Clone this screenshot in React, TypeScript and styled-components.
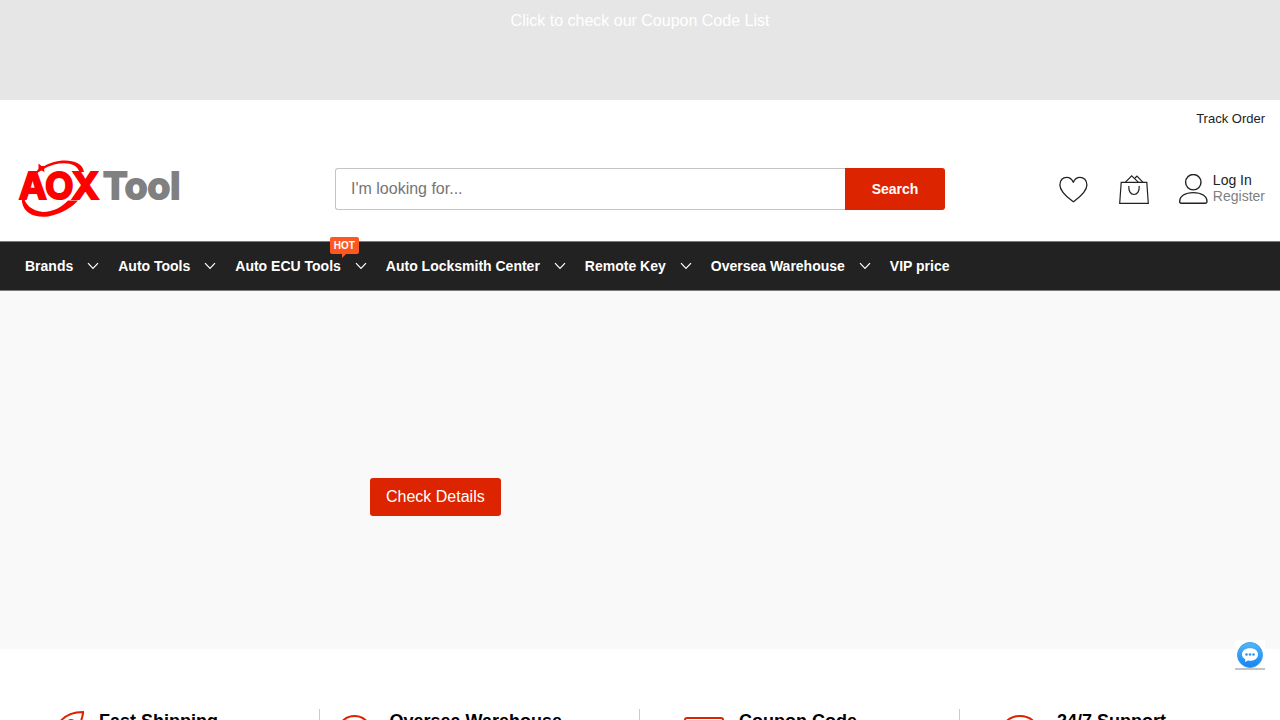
import React from "react";
import styled, { createGlobalStyle } from "styled-components";

const GlobalStyle = createGlobalStyle`
  *, *::before, *::after { box-sizing: border-box; }
  body {
    margin: 0;
    background: #fff;
    color: #000;
    font-family: "Liberation Sans", Arial, sans-serif;
    font-size: 14px;
  }
  a { color: inherit; text-decoration: none; }
  button, input { font-family: inherit; }
`;

const Page = styled.div`
  height: 100vh;
  overflow: hidden;
`;

const CouponBanner = styled.a`
  display: block;
  height: 100px;
  padding-top: 10px;
  background: #e6e6e6;
  color: #fff;
  font-size: 16px;
  line-height: 22px;
  text-align: center;
`;

const TopLinks = styled.div`
  display: flex;
  justify-content: flex-end;
  padding: 10px 15px 8px;
  color: #222;
  font-size: 13px;
  line-height: 18px;
`;

const HeaderRow = styled.div`
  display: grid;
  grid-template-columns: 1fr 2fr 1fr;
  align-items: center;
  height: 105px;
`;

const LogoLink = styled.a`
  display: flex;
  padding: 0 15px;
`;

const SearchForm = styled.form`
  display: flex;
  height: 42px;
  margin: 0 15px;
`;

const SearchInput = styled.input`
  flex: 1;
  min-width: 0;
  padding: 0 15px;
  border: 1px solid #c4c4c4;
  border-right: 0;
  border-radius: 3px 0 0 3px;
  background: #fff;
  font-size: 16px;
  &::placeholder { color: #757575; }
`;

const SearchButton = styled.button`
  width: 100px;
  border: 0;
  border-radius: 0 3px 3px 0;
  background: #dd2400;
  color: #fff;
  font-size: 14px;
  font-weight: 700;
`;

const Actions = styled.div`
  display: flex;
  justify-content: flex-end;
  align-items: center;
  gap: 30px;
  padding: 0 15px;
`;

const IconLink = styled.a`
  display: flex;
`;

const Account = styled.div`
  display: flex;
  align-items: center;
  gap: 4px;
`;

const AccountLinks = styled.div`
  display: flex;
  flex-direction: column;
  padding-bottom: 2px;
  line-height: 16px;
`;

const AccountLink = styled.a<{ $muted?: boolean }>`
  color: ${(p) => (p.$muted ? "#808080" : "#222")};
`;

const NavBar = styled.nav`
  height: 50px;
  border: solid #7a7a7a;
  border-width: 1px 0;
  background: #222;
`;

const NavList = styled.ul`
  display: flex;
  gap: 19px;
  height: 100%;
  margin: 0;
  padding: 0 25px;
  list-style: none;
`;

const NavItem = styled.li`
  position: relative;
  display: flex;
  align-items: center;
`;

const NavLink = styled.a`
  display: flex;
  align-items: center;
  gap: 14px;
  color: #fff;
  font-weight: 700;
  line-height: 20px;
  white-space: nowrap;
`;

const HotBadge = styled.span`
  position: absolute;
  top: -5px;
  right: 8px;
  padding: 0 4px;
  border-radius: 2px;
  background: #ff5722;
  color: #fff;
  font-size: 10px;
  font-weight: 700;
  line-height: 17px;
  &::after {
    content: "";
    position: absolute;
    top: 100%;
    left: 12px;
    border-top: 4px solid #ff5722;
    border-right: 4px solid transparent;
  }
`;

const Hero = styled.section`
  height: 358px;
  padding: 187px 370px 0;
  background: #f9f9f9;
`;

const HeroButton = styled.button`
  height: 38px;
  padding: 0 16px;
  border: 0;
  border-radius: 3px;
  background: #dd2400;
  color: #fff;
  font-size: 16px;
  white-space: nowrap;
`;

const Features = styled.section`
  display: grid;
  grid-template-columns: repeat(4, 1fr);
  padding-top: 60px;
`;

const Feature = styled.div`
  display: flex;
  justify-content: center;
  gap: 15px;
  height: 60px;
  border-right: 1px solid #ccc;
  &:last-child { border-right: 0; }
`;

const FeatureTitle = styled.h3<{ $width: number }>`
  width: ${(p) => p.$width}px;
  margin: 0;
  font-size: 18px;
  line-height: 24px;
  white-space: nowrap;
`;

const ChatButton = styled.button`
  position: fixed;
  right: 15px;
  bottom: 50px;
  display: flex;
  justify-content: center;
  width: 30px;
  height: 30px;
  padding: 2px 0 0;
  border: 0;
  border-bottom: 2px solid #c4c4c4;
  background: #fff;
`;

const Logo = () => (
  <svg width="170" height="64" viewBox="15 157 170 64" role="img" aria-label="AOXTool">
    <path
      d="M43 167 C55 158 82 157 84 172 L79.500 172 C76 161 59 161 44 168.500 Z"
      fill="#f00"
    />
    <path d="M38.500 163.500 L41.500 166 L47 166 L44 169 L44.500 172 L41.500 170.500 L36.500 172.500 L38.500 168.500 Z" fill="#f00" />
    <path d="M38 170 C27 178 21 191 22 202 C24 213 34 218 48 216.500 C62 214 72 207 78 200.500 L68 200.500 C62 207 53 212 43 212 C32 211 24 204 24 196 C25 186 31 177 40 171 Z" fill="#f00" />
    <g fontFamily="Inter, sans-serif" fontWeight="700" fontSize="37" strokeWidth="2">
      <text x="19" y="199" fill="#f00" stroke="#f00">AOX</text>
      <text x="103" y="199" fill="#808080" stroke="#808080">Tool</text>
    </g>
  </svg>
);

const HeartIcon = () => (
  <svg width="30" height="30" viewBox="0 0 30 30" fill="none" stroke="#222" strokeWidth="1.3" strokeLinejoin="round">
    <path d="M14.300 27.800 C10 24.500 1 18.500 .9 11 C.8 6 4 3.300 7.600 3.300 C10.800 3.300 13 5.200 14.300 8.300 C15.600 5.200 17.800 3.300 21 3.300 C24.600 3.300 28 6 27.900 11 C27.800 18.500 18.600 24.500 14.300 27.800 Z" />
  </svg>
);

const BagIcon = () => (
  <svg width="30" height="30" viewBox="0 0 30 30" fill="none" stroke="#222" strokeWidth="1.2">
    <path d="M2.200 8.400 H27.800 L29.300 29.300 H.7 Z" />
    <path d="M6.200 8.400 L12.700 1.800 L19.500 8.400 M16 4 L18 2 L24 8.400" />
    <path d="M9.800 12 C9.500 17 11.500 20.500 15 20.500 C18.500 20.500 20.500 17 20.200 12" />
  </svg>
);

const UserIcon = () => (
  <svg width="30" height="30" viewBox="0 0 30 30" fill="none" stroke="#222" strokeWidth="1.4" strokeLinejoin="round">
    <circle cx="14.300" cy="8.200" r="7.700" />
    <path d="M.7 27.500 C.7 22 6 18.600 14.300 18.600 C22.600 18.600 28 22 28 27.500 Q28 29.200 26.500 29.200 H2.200 Q.7 29.200 .7 27.500 Z" />
  </svg>
);

const Chevron = () => (
  <svg width="12" height="8" viewBox="0 0 12 8" fill="none" stroke="#fff" strokeWidth="1.2">
    <path d="M1 1.200 L6 6.500 L11 1.200" />
  </svg>
);

const ChatIcon = () => (
  <svg width="26" height="26" viewBox="0 0 26 26">
    <defs>
      <linearGradient id="chat-fill" x1="0" y1="0" x2="0" y2="1">
        <stop offset="0" stopColor="#53b7f5" />
        <stop offset="1" stopColor="#1583f5" />
      </linearGradient>
    </defs>
    <circle cx="13" cy="13" r="12.500" fill="url(#chat-fill)" stroke="#3f9fee" />
    <path d="M13 6.300 C18 6.300 21 9 21 12.500 C21 16 18 18.800 13 18.800 L11 18.600 L8 20 L8.300 17.300 C6 16 5 14.500 5 12.500 C5 9 8 6.300 13 6.300 Z" fill="#fff" />
    <g fill="#2a96f0">
      <circle cx="9.500" cy="12.500" r="1.300" />
      <circle cx="13" cy="12.500" r="1.300" />
      <circle cx="16.500" cy="12.500" r="1.300" />
    </g>
  </svg>
);

const featureShapes = {
  rocket: (
    <>
      <path d="M39.200 3 C29 3 20 7 15 14 L8 21 L20 34 L26 26 C35 20 38 12 39.200 3 Z" />
      <circle cx="27" cy="15" r="4" />
    </>
  ),
  pin: (
    <>
      <path d="M20 39 C14 31 5 27 5 19 A14.500 12 0 0 1 34 19 C34 27 26 31 20 39 Z" />
      <circle cx="20" cy="19" r="5" />
    </>
  ),
  coupon: (
    <>
      <rect x="1" y="9" width="38" height="26" rx="2" />
      <path d="M12 15 V29" />
    </>
  ),
  support: (
    <>
      <path d="M0 22 A18 15 0 0 1 36 22" />
      <rect x="1" y="22" width="6" height="11" rx="2" />
      <rect x="31" y="22" width="6" height="11" rx="2" />
    </>
  ),
};

const FeatureIcon = ({ shape }: { shape: keyof typeof featureShapes }) => (
  <svg width="40" height="40" viewBox="0 0 40 40" fill="none" stroke="#dd2400" strokeWidth="2">
    {featureShapes[shape]}
  </svg>
);

const navItems = [
  { label: "Brands", menu: true },
  { label: "Auto Tools", menu: true },
  { label: "Auto ECU Tools", menu: true, hot: true },
  { label: "Auto Locksmith Center", menu: true },
  { label: "Remote Key", menu: true },
  { label: "Oversea Warehouse", menu: true },
  { label: "VIP price" },
];

const features: { title: string; shape: keyof typeof featureShapes; width: number }[] = [
  { title: "Fast Shipping", shape: "rocket", width: 176 },
  { title: "Oversea Warehouse", shape: "pin", width: 235 },
  { title: "Coupon Code", shape: "coupon", width: 176 },
  { title: "24/7 Support", shape: "support", width: 181 },
];

export default function App() {
  return (
    <Page>
      <GlobalStyle />
      <CouponBanner href="#coupons">Click to check our Coupon Code List</CouponBanner>
      <header>
        <TopLinks>
          <a href="#track">Track Order</a>
        </TopLinks>
        <HeaderRow>
          <LogoLink href="#home">
            <Logo />
          </LogoLink>
          <SearchForm role="search" onSubmit={(e) => e.preventDefault()}>
            <SearchInput type="text" aria-label="Search products" placeholder="I'm looking for..." />
            <SearchButton type="submit">Search</SearchButton>
          </SearchForm>
          <Actions>
            <IconLink href="#wishlist" aria-label="Wishlist">
              <HeartIcon />
            </IconLink>
            <IconLink href="#cart" aria-label="Cart">
              <BagIcon />
            </IconLink>
            <Account>
              <UserIcon />
              <AccountLinks>
                <AccountLink href="#login">Log In</AccountLink>
                <AccountLink href="#register" $muted>Register</AccountLink>
              </AccountLinks>
            </Account>
          </Actions>
        </HeaderRow>
        <NavBar>
          <NavList>
            {navItems.map((item) => (
              <NavItem key={item.label}>
                <NavLink href="#menu">
                  {item.label}
                  {item.menu && <Chevron />}
                </NavLink>
                {item.hot && <HotBadge>HOT</HotBadge>}
              </NavItem>
            ))}
          </NavList>
        </NavBar>
      </header>
      <main>
        <Hero>
          <HeroButton type="button">Check Details</HeroButton>
        </Hero>
        <Features>
          {features.map((f) => (
            <Feature key={f.title}>
              <FeatureIcon shape={f.shape} />
              <FeatureTitle $width={f.width}>{f.title}</FeatureTitle>
            </Feature>
          ))}
        </Features>
      </main>
      <ChatButton type="button" aria-label="Open chat">
        <ChatIcon />
      </ChatButton>
    </Page>
  );
}
